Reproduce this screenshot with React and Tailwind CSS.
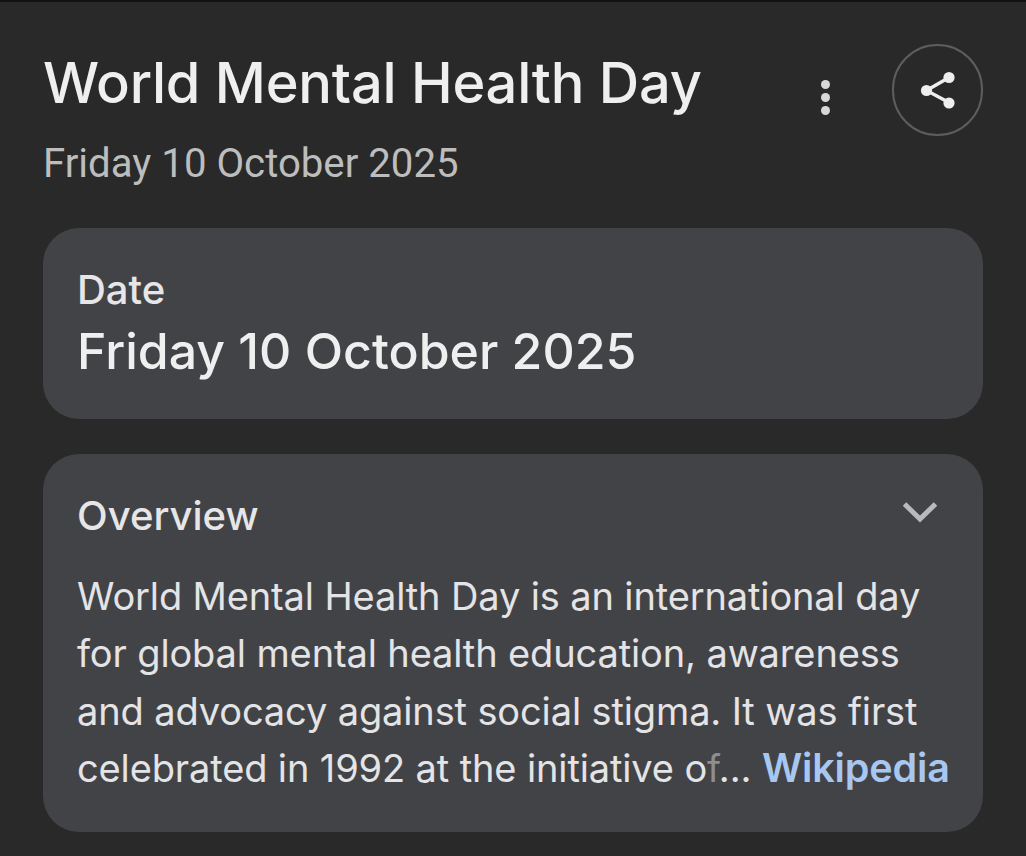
const sans = "font-['Inter','Noto_Sans',sans-serif]"

function ShareIcon() {
  return (
    <svg width="40" height="40" viewBox="0 0 40 40" fill="none">
      <path d="M31 7.5 8.5 20.5 31 32.5" stroke="#eeeeee" strokeWidth="3.4" />
      <circle cx="31" cy="7.5" r="5.6" fill="#eeeeee" />
      <circle cx="8.5" cy="20.5" r="5.6" fill="#eeeeee" />
      <circle cx="31" cy="33" r="5.6" fill="#eeeeee" />
    </svg>
  )
}

function Chevron() {
  return (
    <svg width="36" height="22" viewBox="0 0 36 22" fill="none">
      <path d="M2.5 3 18 18 33.5 3" stroke="#b9babd" strokeWidth="5" />
    </svg>
  )
}

export default function App() {
  return (
    <div className={`h-[856px] w-[1026px] overflow-hidden border-t-2 border-[#111111] bg-[#292929] ${sans}`}>
      <header className="flex items-start pl-[43px] pr-[43px] pt-[43px]">
        <div className="flex-1">
          <h1 className="whitespace-nowrap text-[56px] font-medium leading-[76px] tracking-[-0.25px] text-[#efefef]">World Mental Health Day</h1>
          <p className="mt-[18px] font-['Roboto',sans-serif] text-[40.2px] leading-[50px] text-[#bdbdbd]">Friday 10 October 2025</p>
        </div>
        <button className="mr-[62px] mt-[35px] flex flex-col gap-[4px]">
          <span className="h-[9px] w-[9px] rounded-full bg-[#d8d8da]" />
          <span className="h-[9px] w-[9px] rounded-full bg-[#d8d8da]" />
          <span className="h-[9px] w-[9px] rounded-full bg-[#d8d8da]" />
        </button>
        <button className="-mt-px flex h-[92px] w-[91px] items-center justify-center rounded-full border-[2.5px] border-[#5c5d5f]">
          <ShareIcon />
        </button>
      </header>

      <main className="mx-[43px] mt-[39px] flex flex-col gap-[35px]">
        <section className="h-[191px] rounded-[36px] bg-[#424346] pl-[34px] pr-[35px] pt-[38px]">
          <p className="text-[40px] font-medium leading-[48px] text-[#e6e6e8]">Date</p>
          <p className="mt-[6px] whitespace-nowrap text-[50px] font-medium leading-[62px] text-[#efeff0]">Friday 10 October 2025</p>
        </section>

        <section className="h-[378px] rounded-[36px] bg-[#424346] pl-[34px] pr-[35px] pt-[38px]">
          <div className="flex items-center justify-between pr-[10px]">
            <p className="text-[40px] font-medium leading-[48px] text-[#e6e6e8]">Overview</p>
            <span className="mb-[8px]">
              <Chevron />
            </span>
          </div>
          <p className="mt-[28px] whitespace-nowrap text-[38px] leading-[57.4px] tracking-[-0.13px] text-[#e4e4e6]">
            World Mental Health Day is an international day
            <br />
            for global mental health education, awareness
            <br />
            and advocacy against social stigma. It was first
            <br />
            celebrated in 1992 at the initiative o<span className="text-[#8d8e90]">f</span>... <span className="text-[39.5px] font-semibold text-[#a8c7f0]">Wikipedia</span>
          </p>
        </section>
      </main>
    </div>
  )
}
